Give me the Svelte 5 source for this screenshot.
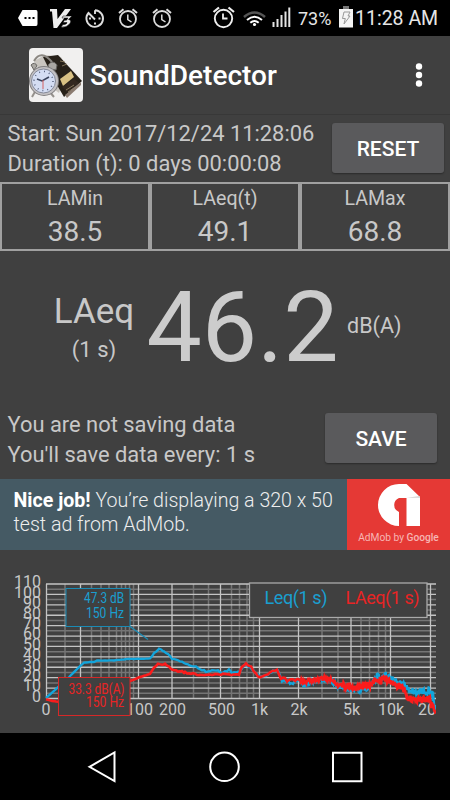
<script>
	const stats = [
		{ label: 'LAMin', value: '38.5' },
		{ label: 'LAeq(t)', value: '49.1' },
		{ label: 'LAMax', value: '68.8' }
	];

	const levels = [110, 100, 90, 80, 70, 60, 50, 40, 30, 20, 10, 0];
	const levelY = (db) => 698.5 - (db * 114.5) / 110;

	const majorX = [46.5, 80.5, 138.5, 172, 220.5, 259.5, 298.5, 351, 390.5, 430.5];
	const minorX = [
		65, 91.5, 101, 109, 116.5, 121.5, 125.5, 129.5, 133.5, 193.5, 208.5, 231.5, 239.5, 247, 253.5,
		322, 338, 361, 369.5, 378.5, 385.5
	];
	const freqs = [
		[46, '0'],
		[139.5, '100'],
		[172.5, '200'],
		[221.5, '500'],
		[259.5, '1k'],
		[299, '2k'],
		[351.5, '5k'],
		[391, '10k'],
		[431, '20k']
	];

	const leq = [
		[46, 698], [65, 681], [72, 674], [84, 662.5], [94, 662], [97, 660.5], [112, 660.5], [128, 659],
		[150, 658.5], [154, 653], [159, 649], [164, 651], [172, 658.5], [182, 662], [196, 667],
		[206, 671.5], [216, 670], [221, 672.5], [229, 670], [232, 673], [240, 672], [245, 664],
		[250, 667], [260, 677], [268, 675], [273, 671], [278, 671], [282, 680], [291, 683], [298, 680],
		[304, 685], [310, 682], [323, 679], [332, 682], [338, 686], [357, 690], [368, 687], [374, 681],
		[377, 675], [381, 680], [386, 675], [391, 679], [400, 684], [405, 685], [409, 691], [422, 692],
		[429, 691], [433, 697], [436, 712]
	];
	const laeq = [
		[46, 699.5], [58, 702], [90, 692], [130, 681], [140, 677], [150, 674], [154, 668], [158, 664],
		[165, 664], [172, 669.5], [185, 672.5], [200, 675], [215, 674.5], [239, 674.5], [242, 667],
		[246, 664], [251, 667], [256, 674], [260, 677.5], [268, 675], [273, 670], [277, 670], [281, 678],
		[291, 681], [298, 678.5], [304, 683], [310, 680], [323, 678], [332, 680], [338, 685], [357, 688],
		[362, 684.5], [370, 686], [374, 681], [377, 678], [381, 681], [386, 678], [392, 684], [403, 688],
		[408, 698], [420, 699.5], [430, 700], [433, 708], [436, 716]
	];

	// measured spectra get rougher toward the high frequencies
	function trace(points, seed) {
		let s = seed;
		let out = '';
		for (let i = 0; i < points.length - 1; i++) {
			const [x0, y0] = points[i];
			const [x1, y1] = points[i + 1];
			for (let x = x0; x < x1; x += x < 300 ? 2 : 0.6) {
				s = (s * 16807) % 2147483647;
				const rough = x < 150 ? 0.2 : x < 280 ? 0.8 : x < 340 ? 2 : x < 430 ? 3.6 : 6;
				const y = y0 + ((y1 - y0) * (x - x0)) / (x1 - x0) + (s / 2147483647 - 0.5) * rough * 2;
				out += `${out ? 'L' : 'M'}${x.toFixed(1)} ${y.toFixed(1)}`;
			}
		}
		return out;
	}
</script>

{#snippet alarm()}
	<svg width="20" height="22" viewBox="0 0 20 22" fill="none" stroke="#ddd">
		<circle cx="10" cy="12" r="8" stroke-width="1.8" />
		<path d="M1 6 5.5 2.2M19 6l-4.500-3.800" stroke-width="2" />
		<path d="M9.800 7.500v5l3.700 2.500" stroke-width="1.500" />
	</svg>
{/snippet}

<div class="screen">
	<div class="status">
		<svg class="notes" width="108" height="22" viewBox="0 0 108 22">
			<path d="M0 11 4.500 3H18Q19.500 3 19.500 5V17Q19.500 19 18 19H4.500Z" fill="#fff" />
			<path d="M6.500 10h2v2h-2zM10.500 10h2v2h-2zM14.500 10h2v2h-2z" fill="#000" />
			<path d="M32 2h7l.5 10L47 2h6L39 21h-3.500L34 4.500h-2z" fill="#eee" />
			<path d="M45 9h9l-3.500 3.500Q54 13 52 16.500 48.500 21 43 20l2-2.500q4 0 4-2h-4l1.500-2.300h2L50 11h-6z" fill="#eee" stroke="#000" stroke-width=".5" />
			<g fill="none" stroke="#ddd" stroke-width="1.900">
				<path d="M77 3.200V7M77 3.200A8.300 8.300 0 1 1 70.500 6L77 12.500" />
			</g>
			<path d="M71 10.500h2v2h-2zM80.500 10.500h2v2h-2zM76 15.500h2v2h-2z" fill="#ddd" />
		</svg>
		<span class="alarm-a">{@render alarm()}</span>
		<span class="alarm-b">{@render alarm()}</span>
		<svg class="signals" width="80" height="24" viewBox="212 6 80 24" fill="none">
			<circle cx="223.500" cy="18.500" r="8.700" stroke="#eee" stroke-width="1.900" />
			<path d="M213.500 12 219 7.500M234 12l-5.500-4.500" stroke="#eee" stroke-width="2.200" />
			<path d="M223 13.500v5h4.500" stroke="#eee" stroke-width="1.800" />
			<path d="M244 17q10.500-9 21 0" stroke="#555" stroke-width="2.600" />
			<path d="M247 20q7.500-6.500 15 0M250.300 22.800q4.200-3.600 8.400 0" stroke="#fff" stroke-width="2" />
			<circle cx="254.500" cy="24.500" r="1.600" fill="#fff" />
			<path d="M273.500 27v-5M277.500 27v-8M281.500 27V15M285.500 27V11.500M289.300 27V7.500" stroke="#e4e4e4" stroke-width="2" />
		</svg>
		<span class="percent">73%</span>
		<svg class="battery" width="14" height="22" viewBox="0 0 14 22">
			<path d="M4 0h6v3H4z" fill="#777" />
			<path d="M0 3h14v18.500H0z" fill="#f4f4f4" />
			<path d="M5 6h6l-2 4h2l-6 8 1.300-5.500H3.500z" fill="none" stroke="#999" />
		</svg>
		<span class="time">11:28 AM</span>
	</div>

	<header>
		<svg class="logo" width="54" height="54" viewBox="0 0 54 54">
			<rect width="54" height="54" rx="4" fill="#f1f0ef" />
			<path d="M5 13 16 7l16 2 6 14-8 22-8-6z" fill="#c9c5bf" />
			<path d="M14 9 29 7l24 26-18 16-7-12z" fill="#272119" />
			<path d="m31 31 11-8 3 6-11 9z" fill="#d9c184" />
			<path d="m33 39 12-8 5 4-12 9z" fill="#332820" />
			<path d="m33 18 5-2M31 13l5 1M37 42l8-5M39 44l7-5" stroke="#9c8c6c" stroke-width=".8" />
			<path d="M36 47 52 34v3L38 50z" fill="#8b7c71" />
			<path d="m7 42-4 7M20 43l5 6" stroke="#96928d" stroke-width="2" />
			<path d="M8 18q-2-5-6-1l3 5zM19 17q5-6 9 0l-1 5-7-1z" fill="#aaa7a2" stroke="#65635f" />
			<path d="M5 13Q12 1 23 14" fill="none" stroke="#8c8882" stroke-width="2" />
			<circle cx="15" cy="33" r="15" fill="#817f80" />
			<circle cx="15" cy="33" r="14" fill="#c4c2c4" />
			<circle cx="14.500" cy="33" r="12" fill="#d4ddf3" stroke="#858997" />
			<circle cx="14.500" cy="33" r="9.500" fill="none" stroke="#56617e" stroke-width="1.500" stroke-dasharray="1 4" />
			<path d="m8 31 5 2 7-4" fill="none" stroke="#39435c" stroke-width="1.500" />
			<path d="M14 32v9" stroke="#d46060" />
		</svg>
		<h1>SoundDetector</h1>
		<svg class="more" width="8" height="26" viewBox="0 0 8 26" fill="#fff">
			<circle cx="4" cy="4.500" r="3.200" />
			<circle cx="4" cy="13" r="3.200" />
			<circle cx="4" cy="21.500" r="3.200" />
		</svg>
	</header>

	<section class="info">
		<div class="lines">
			<p class="start">Start: Sun 2017/12/24 11:28:06</p>
			<p class="duration">Duration (t): 0 days 00:00:08</p>
		</div>
		<button class="reset">RESET</button>
	</section>

	<section class="stats">
		{#each stats as stat}
			<div class="stat">
				<span class="stat-label">{stat.label}</span>
				<span class="stat-value">{stat.value}</span>
			</div>
		{/each}
	</section>

	<section class="current">
		<div class="measure">
			<span class="name">LAeq</span>
			<span class="window">(1 s)</span>
		</div>
		<span class="reading">46.2</span>
		<span class="unit">dB(A)</span>
	</section>

	<section class="saving">
		<div class="lines">
			<p>You are not saving data</p>
			<p>You'll save data every: 1 s</p>
		</div>
		<button class="save">SAVE</button>
	</section>

	<section class="ad">
		<p class="ad-text"><b>Nice job!</b> You’re displaying a 320 x 50<br />test ad from AdMob.</p>
		<div class="admob">
			<svg width="44" height="44" viewBox="0 0 44 44">
				<path d="M22 1h7.500L43 14v29H29.500V15H22a7.500 7.500 0 0 0 0 14v14A21 21 0 0 1 22 1z" fill="#fff" />
				<path d="M29.500 15H43v-1.500L41.500 13z" fill="#ddd" />
			</svg>
			<span>AdMob by <b>Google</b></span>
		</div>
	</section>

	<svg class="chart" width="450" height="183" viewBox="0 550 450 183">
		<defs>
			<clipPath id="plot"><rect x="0" y="550" width="436" height="183" /></clipPath>
		</defs>

		<g clip-path="url(#plot)">
			<g stroke="#757575" stroke-width="1.500">
				{#each minorX as x}
					<path d="M{x} 584V698.500" />
				{/each}
				{#each levels.slice(1) as db}
					<path d="M46 {levelY(db + 5)}H436" />
				{/each}
			</g>
			<g stroke="#c4c4c4" stroke-width="1.300">
				{#each majorX as x}
					<path d="M{x} 584V698.500" />
				{/each}
				{#each levels as db}
					<path d="M46 {levelY(db)}H436" />
				{/each}
			</g>

			<g class="axis">
				{#each levels as db}
					<text x="41" y={levelY(db) + 3.4} text-anchor="end">{db}</text>
				{/each}
				{#each freqs as [x, label]}
					<text {x} y="714.600" text-anchor="middle">{label}</text>
				{/each}
			</g>

			<path d={trace(leq, 71)} fill="none" stroke="#12a5dc" stroke-width="2.300" />
			<path d={trace(laeq, 1234)} fill="none" stroke="#fa1c1c" stroke-width="2.600" />
		</g>

		<rect x="249.500" y="583" width="177.500" height="34.500" fill="#404040" stroke="#aaa" stroke-width="1.300" />
		<text class="legend leq" x="264.500" y="603.500" textLength="63">Leq(1 s)</text>
		<text class="legend laeq" x="345.500" y="603.500" textLength="74">LAeq(1 s)</text>

		<path d="M130 626.500 148 639.500" stroke="#1a8bb5" stroke-width="1.300" />
		<rect x="66" y="588.500" width="64" height="38" fill="#404040" stroke="#1a8bb5" />
		<text class="marker leq" x="84" y="603.300" textLength="40" lengthAdjust="spacingAndGlyphs">47.3 dB</text>
		<text class="marker leq" x="86" y="618.300" textLength="38" lengthAdjust="spacingAndGlyphs">150 Hz</text>

		<rect x="58.500" y="677.500" width="71.500" height="38" fill="#404040" stroke="#d62828" />
		<text class="marker laeq" x="68.500" y="693.500" textLength="56" lengthAdjust="spacingAndGlyphs">33.3 dB(A)</text>
		<text class="marker laeq" x="86" y="707.300" textLength="38" lengthAdjust="spacingAndGlyphs">150 Hz</text>
	</svg>

	<nav>
		<svg width="450" height="67" viewBox="0 733 450 67" fill="none" stroke="#fff" stroke-width="2">
			<path d="M89.500 766.800 114.500 752.500V781z" />
			<circle cx="224.500" cy="766.800" r="14.300" />
			<path d="M333 752.700h28.500v28.500H333z" />
		</svg>
	</nav>
</div>

<style>
	:global(body) {
		background: #404040;
	}

	.screen {
		width: 450px;
		height: 800px;
		overflow: hidden;
		display: flex;
		flex-direction: column;
		background: #404040;
		color: #c8c8c8;
		font-family: Roboto, sans-serif;
	}

	.screen > * {
		flex-shrink: 0;
		box-sizing: border-box;
	}

	svg {
		display: block;
	}

	p,
	h1 {
		margin: 0;
		white-space: nowrap;
	}

	/* Status bar */
	.status {
		height: 36px;
		background: #000;
		display: flex;
		align-items: center;
		padding-left: 18px;
		color: #e6e6e6;
	}

	.notes {
		flex: none;
	}

	.alarm-a {
		margin-left: -8px;
	}

	.alarm-b {
		margin-left: 14px;
	}

	.signals {
		margin-left: 40px;
		flex: none;
	}

	.percent {
		margin-left: 6px;
		width: 41px;
		font-size: 18px;
		line-height: 36px;
		padding-top: 1px;
	}

	.battery {
		flex: none;
		margin: 0 2px 3px 0;
	}

	.time {
		font-size: 19.5px;
		padding-top: 1px;
		white-space: nowrap;
	}

	/* App bar */
	header {
		height: 79px;
		display: flex;
		align-items: center;
		padding: 0 27px 0 29px;
		border-bottom: 1px solid #383838;
	}

	h1 {
		margin-left: 7px;
		flex: 1;
		font-size: 28px;
		font-weight: 500;
		color: #fff;
	}

	/* Info and saving rows */
	.info {
		height: 67px;
		display: flex;
		justify-content: space-between;
		padding: 4px 6px 0 7.5px;
	}

	.lines {
		font-size: 21.900px;
		line-height: 30px;
	}

	button {
		border: 0;
		border-radius: 3px;
		background: #5a5a5c;
		box-shadow: 0 1px 2px rgba(0, 0, 0, 0.35);
		color: #fff;
		font: 500 21px Roboto, sans-serif;
		width: 112px;
		height: 50px;
		padding: 2px 0 0;
	}

	.reset {
		margin-top: 4px;
	}

	.saving {
		height: 73px;
		display: flex;
		justify-content: space-between;
		padding: 4px 13px 0 7.5px;
	}

	.save {
		margin-top: 3px;
	}

	/* Min / average / max */
	.stats {
		height: 69px;
		display: flex;
	}

	.stat {
		flex: 1;
		border: 2px solid #a0a0a0;
		display: flex;
		flex-direction: column;
		align-items: center;
	}

	.stat-label {
		font-size: 19.600px;
		line-height: 29px;
	}

	.stat-value {
		font-size: 28px;
		line-height: 37px;
	}

	/* Current level */
	.current {
		height: 155px;
		display: flex;
		align-items: center;
		padding-left: 52px;
	}

	.measure {
		width: 84px;
		display: flex;
		flex-direction: column;
		align-items: center;
		line-height: 38px;
		padding-top: 4px;
	}

	.name {
		font-size: 35px;
	}

	.window {
		font-size: 22px;
	}

	.reading {
		margin-left: 10.500px;
		width: 200.500px;
		font-size: 98.500px;
		padding-bottom: 2px;
		color: #ccc;
	}

	.unit {
		font-size: 21.500px;
		padding-bottom: 7px;
	}

	/* Ad banner */
	.ad {
		height: 71px;
		display: flex;
		background: #455a64;
	}

	.ad-text {
		width: 347px;
		box-sizing: border-box;
		padding: 10px 0 0 13.5px;
		font-size: 19.600px;
		line-height: 23.700px;
		font-weight: 300;
		color: #eee;
	}

	.ad-text b {
		font-weight: 700;
		color: #fff;
	}

	.admob {
		flex: 1;
		background: #e53935;
		display: flex;
		flex-direction: column;
		align-items: center;
		padding-top: 4px;
		font-size: 10.200px;
		line-height: 22px;
		color: #f7b5b3;
		white-space: nowrap;
	}

	.admob b {
		font-weight: 500;
	}

	/* Spectrum */
	.axis {
		font-size: 16px;
		fill: #c8c8c8;
	}

	.legend {
		font-size: 18px;
	}

	.marker {
		font-size: 14px;
	}

	.leq {
		fill: #1a9fd0;
	}

	.laeq {
		fill: #e82424;
	}

	nav {
		height: 67px;
		background: #000;
	}
</style>
